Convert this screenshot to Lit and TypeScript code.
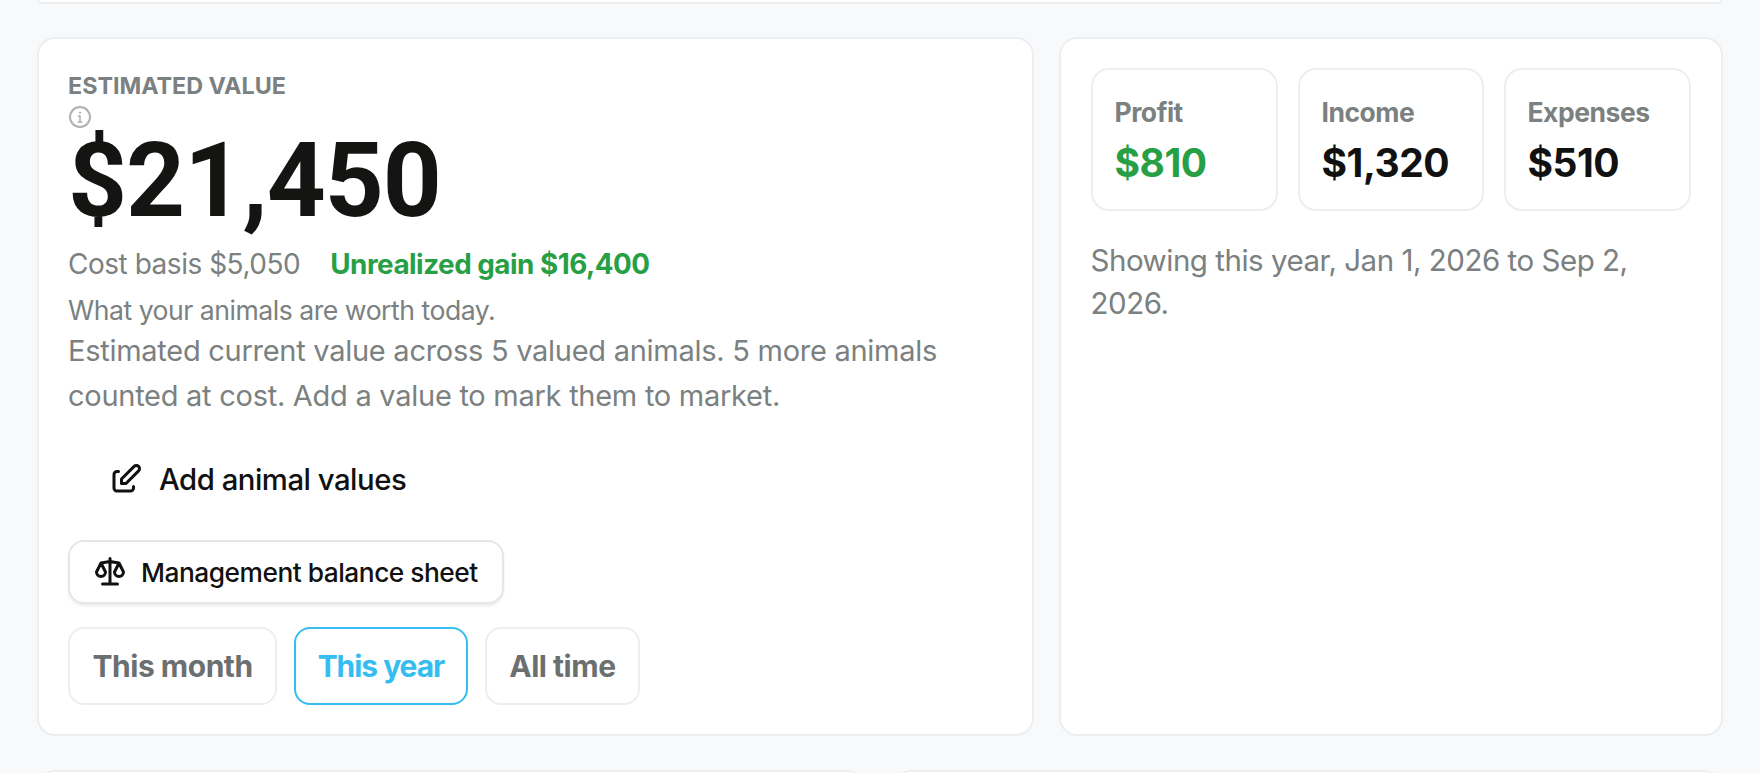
import { LitElement, html, css } from "lit";
import { customElement } from "lit/decorators.js";

@customElement("app-root")
export class AppRoot extends LitElement {
  static styles = css`
    :host {
      display: block;
      height: 773px;
      overflow: hidden;
      background: #f8f9fb;
      font-family: Inter, "Noto Sans", sans-serif;
      color: #111;
      letter-spacing: -0.03em;
    }
    .page {
      display: flex;
      flex-direction: column;
      padding: 0 38px 0 36.5px;
    }
    .card {
      background: #fff;
      border: 2px solid #eceef0;
      border-radius: 18px;
      box-sizing: border-box;
    }
    .stub {
      height: 4px;
      border-top: 0;
      border-radius: 0 0 18px 18px;
    }
    .row {
      display: grid;
      grid-template-columns: 997px 664px;
      gap: 25px;
      margin: 33px 0 34px;
    }
    .main {
      height: 699px;
      padding: 33px 29.5px 0;
    }
    .side {
      height: 699px;
      padding: 29px 30px 0;
    }
    .label {
      font-size: 23.3px;
      font-weight: 700;
      color: #7b8080;
      line-height: 28px;
      letter-spacing: 0;
    }
    .info {
      display: block;
      width: 24px;
      height: 24px;
      color: #aeb1b1;
      margin-top: 5px;
    }
    .big {
      font-family: Roboto, sans-serif;
      font-weight: 700;
      font-size: 103px;
      line-height: 102px;
      letter-spacing: -1px;
      color: #141412;
      margin-top: 1px;
    }
    .meta {
      display: flex;
      gap: 30px;
      font-size: 28px;
      line-height: 36px;
      color: #7b8080;
      margin-top: 14px;
    }
    .gain {
      color: #27a045;
      font-weight: 700;
      font-size: 27.8px;
    }
    .sub {
      font-size: 26.6px;
      line-height: 34px;
      color: #7b8080;
      margin-top: 11px;
    }
    .desc {
      font-size: 29px;
      line-height: 45px;
      letter-spacing: -0.27px;
      color: #7b8080;
      margin-top: 1px;
      width: 900px;
    }
    .ghost {
      display: flex;
      align-items: center;
      gap: 15px;
      height: 62px;
      padding-left: 40px;
      font-size: 29.3px;
      font-weight: 500;
      color: #111;
      margin-top: 30px;
    }
    .ghost svg {
      width: 36px;
      height: 36px;
    }
    .sheet {
      display: inline-flex;
      align-items: center;
      gap: 13px;
      height: 64px;
      box-sizing: border-box;
      padding: 0 24px 0 22px;
      border: 2px solid #e4e6e7;
      border-radius: 16px;
      box-shadow: 0 2px 3px rgba(0, 0, 0, 0.08);
      font-size: 26.3px;
      font-weight: 500;
      color: #111;
      margin-top: 30px;
    }
    .sheet svg {
      width: 36px;
      height: 36px;
    }
    .pills {
      display: flex;
      gap: 16.5px;
      margin-top: 23px;
    }
    .pill {
      height: 78px;
      box-sizing: border-box;
      display: flex;
      align-items: center;
      padding: 0 22.5px;
      border: 2px solid #eceef0;
      border-radius: 16px;
      font-size: 30px;
      font-weight: 700;
      color: #6c6f70;
    }
    .pill.on {
      border-color: #35bdf2;
      color: #35bdf2;
      padding: 0 22px;
      letter-spacing: -0.035em;
    }
    .stats {
      display: grid;
      grid-template-columns: 187px 186px 187px;
      gap: 20px;
    }
    .stat {
      height: 143px;
      box-sizing: border-box;
      border: 2px solid #eceef0;
      border-radius: 18px;
      padding: 26px 22px;
    }
    .stat-label {
      font-size: 26.5px;
      font-weight: 700;
      line-height: 32px;
      color: #7b8080;
    }
    .stat-value {
      font-size: 39px;
      font-weight: 700;
      line-height: 52px;
      color: #111;
      margin-top: 9px;
    }
    .stat-value.good {
      color: #27a045;
    }
    .show {
      font-size: 29.5px;
      line-height: 43px;
      color: #7b8080;
      margin-top: 28px;
    }
    .bottom {
      display: grid;
      grid-template-columns: 1fr 1fr;
      gap: 28px;
    }
    .bottom .card {
      height: 60px;
    }
  `;

  render() {
    return html`
      <div class="page">
        <div class="card stub"></div>
        <div class="row">
          <section class="card main">
            <div class="label">ESTIMATED VALUE</div>
            <svg class="info" viewBox="0 0 24 24" fill="none" stroke="currentColor" stroke-width="2" stroke-linecap="round" stroke-linejoin="round">
              <circle cx="12" cy="12" r="10"></circle>
              <path d="M10.5 11h1.5v6M10.2 17h3.6" stroke-width="1.6"></path>
              <circle cx="12" cy="7.6" r="0.7" fill="currentColor" stroke-width="1"></circle>
            </svg>
            <div class="big">$21,450</div>
            <div class="meta">
              <span>Cost basis $5,050</span>
              <span class="gain">Unrealized gain $16,400</span>
            </div>
            <div class="sub">What your animals are worth today.</div>
            <div class="desc">Estimated current value across 5 valued animals. 5 more animals counted at cost. Add a value to mark them to market.</div>
            <div class="ghost">
              <svg viewBox="0 0 24 24" fill="none" stroke="currentColor" stroke-width="2" stroke-linecap="round" stroke-linejoin="round">
                <path d="M7 7h-1a2 2 0 0 0 -2 2v9a2 2 0 0 0 2 2h9a2 2 0 0 0 2 -2v-1"></path>
                <path d="M20.385 6.585a2.1 2.1 0 0 0 -2.97 -2.97l-8.415 8.385v3h3l8.385 -8.415z"></path>
              </svg>
              <span>Add animal values</span>
            </div>
            <div class="sheet">
              <svg viewBox="0 0 24 24" fill="none" stroke="currentColor" stroke-width="2" stroke-linecap="round" stroke-linejoin="round">
                <path d="M7 20h10M6 6l6 -1l6 1M12 3v17M9 12l-3 -6l-3 6a3 3 0 0 0 6 0M21 12l-3 -6l-3 6a3 3 0 0 0 6 0"></path>
              </svg>
              <span>Management balance sheet</span>
            </div>
            <div class="pills">
              <div class="pill">This month</div>
              <div class="pill on">This year</div>
              <div class="pill">All time</div>
            </div>
          </section>
          <section class="card side">
            <div class="stats">
              <div class="stat">
                <div class="stat-label">Profit</div>
                <div class="stat-value good">$810</div>
              </div>
              <div class="stat">
                <div class="stat-label">Income</div>
                <div class="stat-value">$1,320</div>
              </div>
              <div class="stat">
                <div class="stat-label">Expenses</div>
                <div class="stat-value">$510</div>
              </div>
            </div>
            <div class="show">Showing this year, Jan 1, 2026 to Sep 2, 2026.</div>
          </section>
        </div>
        <div class="bottom">
          <div class="card"></div>
          <div class="card"></div>
        </div>
      </div>
    `;
  }
}
